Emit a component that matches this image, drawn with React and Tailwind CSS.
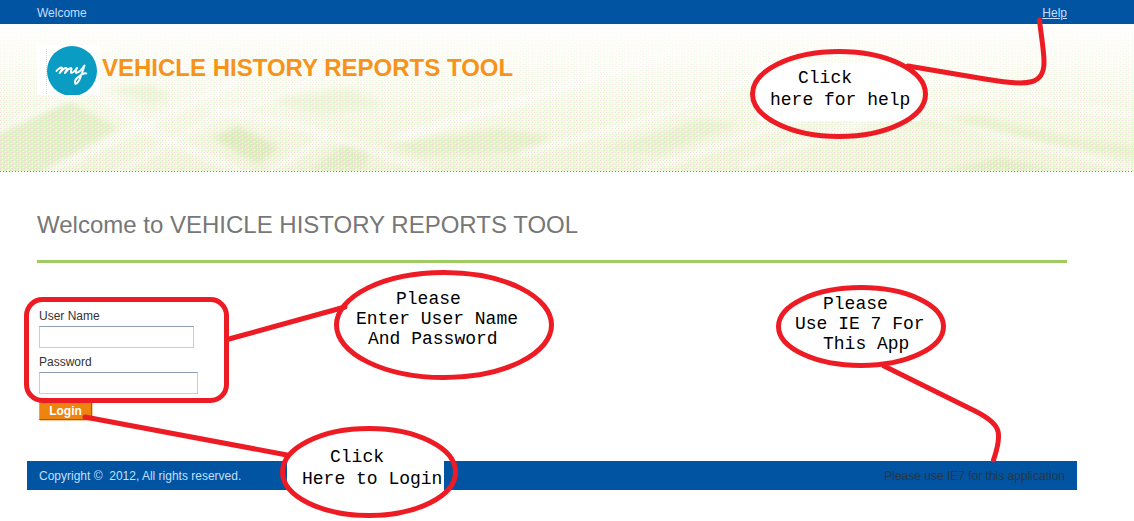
import React from "react";

function HeaderArt() {
  return (
    <svg
      className="absolute inset-0 h-full w-full"
      viewBox="0 0 1134 147"
      preserveAspectRatio="none"
      aria-hidden="true"
    >
      <defs>
        <linearGradient id="fade" x1="0" y1="0" x2="0" y2="1">
          <stop offset="0" stopColor="#ffffff" />
          <stop offset="0.3" stopColor="#fcfef6" />
          <stop offset="0.6" stopColor="#f6fae8" />
          <stop offset="1" stopColor="#eff6da" />
        </linearGradient>
        <filter id="soft" x="-10%" y="-30%" width="120%" height="160%">
          <feGaussianBlur stdDeviation="3" />
        </filter>
        <pattern id="grain" width="6" height="4" patternUnits="userSpaceOnUse">
          <rect x="0" y="0" width="1" height="1" fill="#fdc8dc" />
          <rect x="3" y="0" width="1" height="1" fill="#b8f4ea" />
          <rect x="1" y="2" width="1" height="1" fill="#fdf59a" />
          <rect x="4" y="2" width="1" height="1" fill="#c6e8b0" />
          <rect x="2" y="1" width="1" height="1" fill="#ffffff" />
          <rect x="5" y="3" width="1" height="1" fill="#ffffff" />
        </pattern>
        <linearGradient id="grainFade" x1="0" y1="0" x2="0" y2="1">
          <stop offset="0" stopColor="#fff" stopOpacity="0.15" />
          <stop offset="1" stopColor="#fff" stopOpacity="0.8" />
        </linearGradient>
        <mask id="grainMask">
          <rect width="1134" height="147" fill="url(#grainFade)" />
        </mask>
      </defs>
      <rect width="1134" height="147" fill="url(#fade)" />
      <g filter="url(#soft)">
        <path d="M-5 105 L70 78 L118 104 L40 150 H-5Z" fill="#e2f1c8" />
        <path d="M110 65 L150 60 L172 72 L150 82Z" fill="#ecf6d9" />
        <path d="M212 114 L238 102 L280 124 L258 140Z" fill="#ddedbe" />
        <path d="M270 75 L350 64 L385 82 L320 92Z" fill="#edf6db" />
        <path d="M308 147 L345 120 L372 125 L362 147Z" fill="#e2efc6" />
        <path d="M385 120 L500 105 L550 112 L530 128 L420 132Z" fill="#e5f2cb" />
        <path d="M600 125 L700 96 L740 100 L660 130Z" fill="#e7f3d0" />
        <path d="M890 98 L980 92 L1060 112 L1134 122 V134 L1000 112Z" fill="#e7f3cd" />
        <path d="M940 147 L1000 134 L1060 147Z" fill="#e0efc2" />
        <g fill="none" stroke="#ffffff" strokeOpacity="0.9">
          <path d="M-5 108 L120 50" strokeWidth="5" />
          <path d="M45 150 L150 98 L240 56" strokeWidth="6" />
          <path d="M100 72 L160 112 L250 152" strokeWidth="6" />
          <path d="M110 152 L215 94 L330 50" strokeWidth="4" />
          <path d="M395 115 L500 83 L680 26" strokeWidth="8" />
          <path d="M210 84 L300 102 L430 147" strokeWidth="5" />
          <path d="M270 147 L330 112" strokeWidth="5" />
          <path d="M520 130 L650 95 L760 50" strokeWidth="5" />
          <path d="M640 147 L720 122 L850 75 L1000 45" strokeWidth="5" />
          <path d="M740 143 L900 84 L1000 70" strokeWidth="4" />
          <path d="M890 84 L1020 116 L1134 146" strokeWidth="4" />
          <path d="M1134 92 L1010 72" strokeWidth="5" />
        </g>
      </g>
      <rect width="1134" height="147" fill="url(#grain)" mask="url(#grainMask)" />
    </svg>
  );
}

function Logo() {
  return (
    <svg
      className="h-[49px] w-[63px] shrink-0"
      viewBox="0 0 63 49"
      role="img"
      aria-label="my"
    >
      <rect width="63" height="49" fill="#fff" />
      <path d="M9.500 3V49" stroke="#d0d8d0" strokeDasharray="1 1" />
      <circle cx="35" cy="25" r="25" fill="#0a9cc3" />
      <g
        fill="none"
        stroke="#fff"
        strokeWidth="2"
        strokeLinecap="round"
        strokeLinejoin="round"
      >
        <path d="M19.500 25C21.500 22.500 24.500 20.700 25 22C25.200 23.500 23.500 25.500 22.700 27C25 24 28 21.500 29.500 22C30.700 22.800 28.800 25 28 27C30.300 24 33 21.800 34.300 22.300C35.500 23.200 33 26 34 26.800C35.500 27.500 38 24.500 40 22" />
        <path d="M40 22C38.500 24.500 38 26.800 39.500 26.800C42 26.500 45.500 22.500 47.500 19.500C46 24 44.500 29 42.500 33.500C41 36.500 39.300 38.500 38.200 37.500C37 36 38.500 32.500 43 29.500C46 27.500 48 26.500 49.300 27.500" />
      </g>
    </svg>
  );
}

function Markup() {
  return (
    <svg
      className="absolute top-0 left-0 h-[521px] w-[1134px]"
      viewBox="0 0 1134 521"
      aria-hidden="true"
    >
      <rect x="757" y="63" width="163" height="58" fill="#fff" />
      <rect x="287" y="445" width="157" height="50" fill="#fff" />
      <g
        fill="none"
        stroke="#ed1c24"
        strokeWidth="5"
        strokeLinecap="round"
        strokeLinejoin="round"
      >
        <ellipse cx="839" cy="94" rx="86.500" ry="42.500" />
        <path d="M908 66L985 79C1030 87 1044 84 1044 62C1044 50 1041 35 1039.500 20" />
        <rect x="26.500" y="299.500" width="200" height="101" rx="16" />
        <path d="M229 339L345 307" />
        <ellipse cx="444" cy="325" rx="107.500" ry="52.500" />
        <ellipse cx="861" cy="326.500" rx="82.500" ry="39" />
        <path d="M884 366L975 411C1001 424 1003 432 993.500 460" />
        <path d="M85 417L287 455" />
        <ellipse cx="369" cy="472" rx="86.500" ry="43.500" />
      </g>
    </svg>
  );
}

const noteText =
  "absolute whitespace-nowrap font-['Liberation_Mono',monospace] text-[18px] text-black";

function Annotations() {
  return (
    <div className="pointer-events-none absolute inset-0 overflow-hidden">
      <Markup />
      <div className={`${noteText} top-[67px] left-[770px] leading-[22px]`}>
        <p className="pl-7">Click</p>
        <p>here for help</p>
      </div>
      <div className={`${noteText} top-[289px] left-[356px] leading-5`}>
        <p className="pl-10">Please</p>
        <p>Enter User Name</p>
        <p className="pl-3">And Password</p>
      </div>
      <div className={`${noteText} top-[294px] left-[795px] leading-5`}>
        <p className="pl-7">Please</p>
        <p>Use IE 7 For</p>
        <p className="pl-7">This App</p>
      </div>
      <div className={`${noteText} top-[446px] left-[302px] leading-[22px]`}>
        <p className="pl-7">Click</p>
        <p>Here to Login</p>
      </div>
    </div>
  );
}

const blueBar = "flex items-center justify-between bg-[#0054a2] text-xs";

export default function App() {
  return (
    <div className="relative min-h-[521px] bg-white font-['Liberation_Sans',Arial,sans-serif] text-xs text-[#333]">
      <nav className={`${blueBar} h-6 pt-0.5 pr-[67px] pl-[37px] text-[#c4dfff]`}>
        <span>Welcome</span>
        <a href="#help" className="underline">
          Help
        </a>
      </nav>

      <header className="relative h-[147px]">
        <HeaderArt />
        <div className="relative flex gap-0.5 pt-[22px] pl-[37px]">
          <Logo />
          <div className="pt-2 text-2xl leading-7 font-bold text-[#f7931a]">
            VEHICLE HISTORY REPORTS TOOL
          </div>
        </div>
      </header>
      <div className="h-px bg-[repeating-linear-gradient(90deg,#7f8f3f_0_1px,transparent_1px_3px)]" />

      <main className="pr-[67px] pl-[37px]">
        <h1 className="border-b-3 border-[#a0cb62] pt-[37px] pb-[19px] text-2xl leading-8 text-[#777]">
          Welcome to VEHICLE HISTORY REPORTS TOOL
        </h1>
        <form
          className="flex flex-col items-start pt-[45px] pl-0.5"
          onSubmit={(e) => e.preventDefault()}
        >
          <label htmlFor="user" className="leading-4">
            User Name
          </label>
          <input
            id="user"
            type="text"
            className="mt-0.5 h-[22px] w-[155px] border border-[#c5cedc] border-t-[#8d9db5] bg-white px-1 outline-none"
          />
          <label htmlFor="password" className="mt-1.5 leading-4">
            Password
          </label>
          <input
            id="password"
            type="password"
            className="mt-0.5 h-[22px] w-[159px] border border-[#c5cedc] border-t-[#8d9db5] bg-white px-1 outline-none"
          />
          <button
            type="submit"
            className="mt-1.5 h-5 w-[53px] border border-[#f0a040] border-r-[#a85a10] border-b-[#a85a10] bg-[#ee8410] pt-0.5 font-bold leading-4 text-white shadow-[1px_1px_1px_#e8cfa0]"
          >
            Login
          </button>
        </form>
      </main>

      <footer className={`${blueBar} mt-[41px] mr-[57px] ml-[27px] h-[29px] px-3`}>
        <span className="whitespace-pre text-[#c4dfff]">
          Copyright ©  2012, All rights reserved.
        </span>
        <span className="text-[#263746]">Please use IE7 for this application</span>
      </footer>

      <Annotations />
    </div>
  );
}
